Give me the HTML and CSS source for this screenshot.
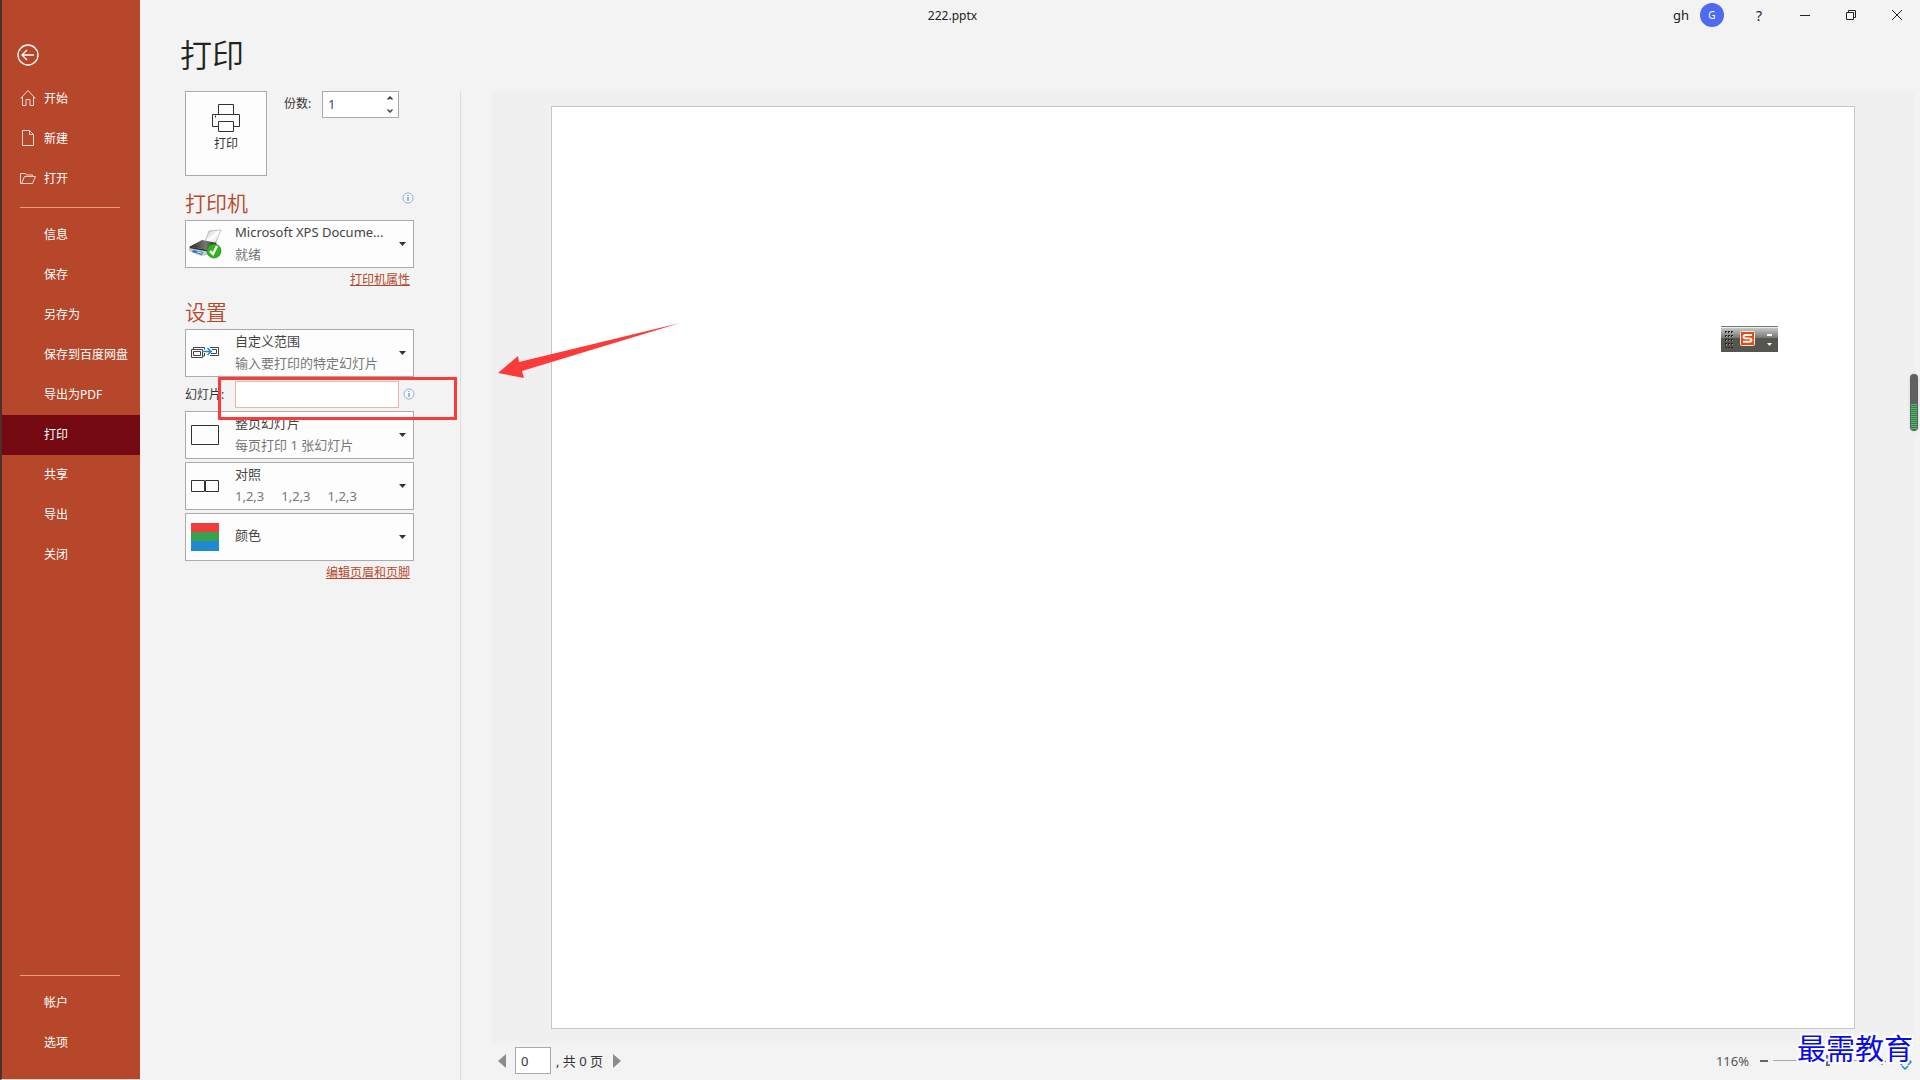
FILE: index.html
```html
<!DOCTYPE html>
<html lang="zh-CN">
<head>
  <meta charset="UTF-8">
  <meta name="viewport" content="width=device-width, initial-scale=1.0">
  <title>222.pptx</title>
  <link rel="stylesheet" href="styles.css">
</head>
<body>
  <nav class="sidebar">
    <button class="back" aria-label="返回">
      <svg width="22" height="22" viewBox="0 0 22 22" fill="none" stroke="#fff" stroke-width="1.3"><circle cx="11" cy="11" r="10"/><path d="M17 11H5.500M10 6l-5 5 5 5"/></svg>
    </button>
    <a href="#" class="nav-item with-icon">
      <svg width="16" height="18" viewBox="0 0 16 18" fill="none" stroke="#f3d9d1"><path d="M.5 9.500 8 1.500l7.500 8M2.500 8v8.500h3.500v-6h4v6h3.500V8"/></svg>开始</a>
    <a href="#" class="nav-item with-icon">
      <svg width="16" height="18" viewBox="0 0 16 18" fill="none" stroke="#f3d9d1"><path d="M2.500 1.500h7l4 4v11h-11zM9.500 1.500v4h4"/></svg>新建</a>
    <a href="#" class="nav-item with-icon">
      <svg width="16" height="18" viewBox="0 0 16 18" fill="none" stroke="#f3d9d1"><path d="M1.500 14.500h11l3-7h-11l-3 7h-1v-10h5l1 1.500h6v1.500"/></svg>打开</a>
    <hr>
    <a href="#" class="nav-item">信息</a>
    <a href="#" class="nav-item">保存</a>
    <a href="#" class="nav-item">另存为</a>
    <a href="#" class="nav-item">保存到百度网盘</a>
    <a href="#" class="nav-item">导出为PDF</a>
    <a href="#" class="nav-item active">打印</a>
    <a href="#" class="nav-item">共享</a>
    <a href="#" class="nav-item">导出</a>
    <a href="#" class="nav-item">关闭</a>
    <hr class="bottom-line">
    <a href="#" class="nav-item">帐户</a>
    <a href="#" class="nav-item">选项</a>
  </nav>

  <main>
    <header class="titlebar">
      <span class="doc-name">222.pptx</span>
      <span class="user">gh</span>
      <span class="avatar">G</span>
      <button class="win-btn" aria-label="帮助">?</button>
      <button class="win-btn" aria-label="最小化"><svg width="12" height="12" stroke="#222"><path d="M1 6.500h10"/></svg></button>
      <button class="win-btn" aria-label="还原"><svg width="12" height="12" fill="none" stroke="#222"><path d="M1.500 3.500h7v7h-7zM3.500 3.500v-2h7v7h-2"/></svg></button>
      <button class="win-btn" aria-label="关闭"><svg width="12" height="12" stroke="#222"><path d="M1 1l10 10M11 1L1 11"/></svg></button>
    </header>
    <h1>打印</h1>

    <div class="content">
      <section class="settings">
        <div class="print-row">
          <button class="print-btn">
            <svg width="28" height="28" viewBox="0 0 28 28" fill="#fdfdfd" stroke="#333"><path d="M6.500 10.500v-10h15v10"/><path d="M.5 10.500h27v12H.5z"/><path d="M6.500 17.500h15v10h-15z"/><path d="M3 12.500h1" stroke-width="2"/></svg>
            打印
          </button>
          <label for="copies">份数:</label>
          <div class="spin">
            <input type="text" id="copies" value="1">
            <div class="spin-btns">
              <button aria-label="增加"><svg width="6" height="4" fill="none" stroke="#444" stroke-width="1.500"><path d="M.5 3.500l2.500-2.500 2.500 2.500"/></svg></button>
              <button aria-label="减少"><svg width="6" height="4" fill="none" stroke="#444" stroke-width="1.500"><path d="M.5.5l2.500 2.500 2.500-2.500"/></svg></button>
            </div>
          </div>
        </div>

        <div class="section-head">
          <h2>打印机</h2>
          <svg class="info" width="12" height="12" viewBox="0 0 12 12"><circle cx="6" cy="6" r="5" fill="#f8fbff" stroke="#8fb0e0"/><path d="M6 5v4M6 3v1" stroke="#4a6fb5"/></svg>
        </div>
        <div class="combo">
          <select aria-label="打印机"><option>Microsoft XPS Docume...</option></select>
          <svg class="icon printer" width="34" height="30" viewBox="0 0 34 30">
            <defs>
              <linearGradient id="lid" x2="1" y2="0"><stop stop-color="#222"/><stop offset=".6" stop-color="#777"/><stop offset="1" stop-color="#222"/></linearGradient>
              <linearGradient id="sheet" x2="1" y2="1"><stop stop-color="#bbb"/><stop offset=".5" stop-color="#fff"/><stop offset="1" stop-color="#ccc"/></linearGradient>
            </defs>
            <path d="M17 12l4-10 12-1-6 14z" fill="url(#sheet)" stroke="#aaa" stroke-width=".7"/>
            <path d="M1 18l13-7 15 3-8 7z" fill="url(#lid)"/>
            <path d="M1 18l19 3v5l-7 1-12-5z" fill="#c4ccd2"/>
            <path d="M2 18.500l17 3" stroke="#333" stroke-width="1.500"/>
            <path d="M5 21l10 2-1 3-10-3z" fill="#2f75b8"/><path d="M9 23l5 1" stroke="#8fe0e8" stroke-width="1.500"/>
            <circle cx="26" cy="22" r="7" fill="#2fb51c" stroke="#16870e" stroke-width=".7"/>
            <path d="M22 22l3 3 4-8" fill="none" stroke="#fff" stroke-width="2.400"/>
          </svg>
          <span class="desc">就绪</span>
          <svg class="caret" width="7" height="4"><path d="M0 0h7L3.500 4z"/></svg>
        </div>
        <a href="#" class="link">打印机属性</a>

        <div class="section-head second"><h2>设置</h2></div>
        <div class="combo">
          <select aria-label="打印范围"><option>自定义范围</option></select>
          <svg class="icon" width="28" height="28" viewBox="0 0 28 28" fill="none" stroke="#444">
            <path d="M2.500 10.500v-2h11v2M.5 10.500h11v8H.5zM2.500 12.500h7v4h-7zM13.500 14v3h-2"/><path d="M19 8.500h8.500v8H19M21 10.500h4.500v4H20"/><path d="M11 12.500h10M16.500 9l3.500 3.500-3.500 3.500" stroke="#1f8ad0" stroke-width="1.500"/>
          </svg>
          <span class="desc">输入要打印的特定幻灯片</span>
          <svg class="caret" width="7" height="4"><path d="M0 0h7L3.500 4z"/></svg>
        </div>
        <div class="slides-row">
          <label for="slides">幻灯片:</label>
          <input type="text" id="slides">
          <svg class="info" width="12" height="12" viewBox="0 0 12 12"><circle cx="6" cy="6" r="5" fill="#f8fbff" stroke="#8fb0e0"/><path d="M6 5v4M6 3v1" stroke="#4a6fb5"/></svg>
          <div class="mark-box"></div>
        </div>
        <div class="combo">
          <select aria-label="版式"><option>整页幻灯片</option></select>
          <svg class="icon" width="28" height="28" fill="none" stroke="#333"><path d="M.5 4.500h27v19H.5z"/></svg>
          <span class="desc">每页打印 1 张幻灯片</span>
          <svg class="caret" width="7" height="4"><path d="M0 0h7L3.500 4z"/></svg>
        </div>
        <div class="combo">
          <select aria-label="对照"><option>对照</option></select>
          <svg class="icon" width="28" height="28" fill="none" stroke="#333"><path d="M.5 8.500h13v11H.5zM14.500 8.500h13v11h-13z"/></svg>
          <span class="desc collate"><span>1,2,3</span><span>1,2,3</span><span>1,2,3</span></span>
          <svg class="caret" width="7" height="4"><path d="M0 0h7L3.500 4z"/></svg>
        </div>
        <div class="combo single">
          <select aria-label="颜色"><option>颜色</option></select>
          <svg class="icon" width="28" height="28"><path d="M0 0h28v9H0z" fill="#ee3e3b"/><path d="M0 9h28v9H0z" fill="#38a04f"/><path d="M0 18h28v10H0z" fill="#1f8ad0"/></svg>
          <svg class="caret" width="7" height="4"><path d="M0 0h7L3.500 4z"/></svg>
        </div>
        <a href="#" class="link">编辑页眉和页脚</a>
      </section>

      <section class="preview">
        <div class="canvas">
          <div class="slide-page"></div>
        </div>
        <footer>
          <button class="page-btn" aria-label="上一页"><svg width="8" height="14" fill="#8c8c8c"><path d="M8 0v14L0 7z"/></svg></button>
          <input type="text" class="page-no" value="0" aria-label="页码">
          <span class="page-total">, 共 0 页</span>
          <button class="page-btn" aria-label="下一页"><svg width="8" height="14" fill="#8c8c8c"><path d="M0 0v14l8-7z"/></svg></button>
          <span class="zoom-value">116%</span>
          <button class="zoom-btn" aria-label="缩小"><svg width="8" height="8" stroke="#666" stroke-width="2"><path d="M0 4h8"/></svg></button>
          <input type="range" class="zoom-range" value="53" aria-label="缩放">
          <button class="zoom-btn" aria-label="放大"><svg width="8" height="8" stroke="#666" stroke-width="2"><path d="M0 4h8M4 0v8"/></svg></button>
          <button class="zoom-btn fit" aria-label="适应页面"><svg width="14" height="14" fill="none" stroke="#1f8ad0" stroke-width="1.500"><path d="M4 3L1 6l3 3M10 3l3 3-3 3M4 10l3 3 3-3"/></svg></button>
        </footer>
        <svg class="arrow" width="182" height="56"><path d="M0 50l20-17 1 6L182 0 24 48l2 7z" fill="#fb3a3a"/></svg>
        <div class="ime">
          <svg width="57" height="26">
            <defs>
              <linearGradient id="bar" x2="0" y2="1"><stop stop-color="#d8d8d8"/><stop offset=".45" stop-color="#777"/><stop offset=".46" stop-color="#555650"/><stop offset="1" stop-color="#555650"/></linearGradient>
              <pattern id="dots" width="3" height="4" patternUnits="userSpaceOnUse" x="4" y="5"><path d="M0 0h2v2H0z" fill="#222"/><path d="M1 1h1v1H1z" fill="#aaa"/></pattern>
            </defs>
            <path d="M0 0h57v26H0z" fill="url(#bar)"/><path d="M0 .5h57" stroke="#777"/><path d="M0 1.500h57" stroke="#eee"/>
            <path d="M4 5h8v17H4z" fill="url(#dots)"/>
            <rect x="19.500" y="5.500" width="14" height="14" rx="1" fill="#ea4b0c" stroke="#eee"/>
            <path d="M31 9h-6q-2.500 0-2.500 1.700t2.500 1.700h3q2.500 0 2.500 1.700t-2.500 1.700H22" fill="none" stroke="#fff" stroke-width="1.900"/>
            <path d="M46 8h5v2h-5zM46 17h5l-2.500 3z" fill="#fff"/>
          </svg>
        </div>
        <div class="meter"><div class="meter-level"></div></div>
        <div class="watermark">最需教育</div>
      </section>
    </div>
  </main>
</body>
</html>
```

FILE: styles.css
```css
* {
  box-sizing: border-box;
}
body {
  margin: 0;
  display: flex;
  min-height: 100vh;
  background: #f3f3f3;
  color: #333;
  font-family: "Noto Sans", "Noto Sans CJK SC", sans-serif;
  font-size: 12px;
  overflow: hidden;
}
button, input, select {
  font: inherit;
  color: inherit;
  margin: 0;
}
button {
  background: none;
  border: none;
  padding: 0;
}
svg {
  display: block;
  flex: none;
}

/* sidebar */
.sidebar {
  width: 140px;
  flex: none;
  display: flex;
  flex-direction: column;
  background: #b7472a;
  border-left: 2px solid #4d3029;
  border-bottom: 1px solid #ddd;
  padding: 44px 0 16px;
}
.back {
  align-self: flex-start;
  margin: 0 0 12px 15px;
}
.nav-item {
  display: flex;
  align-items: center;
  height: 40px;
  padding-left: 42px;
  padding-bottom: 2px;
  color: #fff;
  text-decoration: none;
}
.with-icon {
  padding-left: 18px;
  padding-bottom: 0;
  gap: 8px;
}
.active {
  background: #740912;
}
.sidebar hr {
  width: 100px;
  height: 1px;
  border: none;
  background: #ee9a84;
  margin: 9px 0 7px 18px;
}
.sidebar .bottom-line {
  margin-top: auto;
}

/* title bar */
main {
  flex: 1;
  display: flex;
  flex-direction: column;
  min-width: 0;
}
.titlebar {
  display: flex;
  align-items: center;
  height: 30px;
  color: #222;
}
.doc-name {
  flex: 1;
  text-align: center;
  padding-left: 92px;
}
.user {
  font-size: 13px;
}
.avatar {
  width: 24px;
  height: 24px;
  line-height: 24px;
  border-radius: 50%;
  background: #4f6bed;
  color: #fff;
  font-size: 10px;
  text-align: center;
  margin: 0 12px 0 11px;
}
.win-btn {
  width: 46px;
  height: 30px;
  display: flex;
  align-items: center;
  justify-content: center;
  font-size: 14px;
}
h1 {
  margin: 0 0 11px 40px;
  line-height: 50px;
  font-size: 32px;
  font-weight: 350;
  color: #222;
}
.content {
  flex: 1;
  display: flex;
}

/* print settings */
.settings {
  width: 321px;
  flex: none;
  padding: 0 46px 0 45px;
  border-right: 1px solid #dcdcdc;
}
.print-row {
  display: flex;
  align-items: flex-start;
}
.print-btn {
  width: 82px;
  height: 85px;
  display: flex;
  flex-direction: column;
  align-items: center;
  gap: 2px;
  padding-top: 12px;
  background: #fdfdfd;
  border: 1px solid #ababab;
}
.print-row label {
  width: 38px;
  margin-left: 17px;
  line-height: 26px;
}
.spin {
  display: flex;
  width: 77px;
  height: 27px;
  background: #fff;
  border: 1px solid #ababab;
}
.spin input {
  flex: 1;
  min-width: 0;
  border: none;
  background: none;
  padding: 0 5px 2px;
  font-size: 13px;
  color: #3b4a80;
}
.spin-btns {
  display: flex;
  flex-direction: column;
  width: 16px;
}
.spin-btns button {
  flex: 1;
  display: flex;
  align-items: center;
  justify-content: center;
}
.section-head {
  display: flex;
  justify-content: space-between;
  margin-top: 12px;
}
.section-head.second {
  margin-top: 8px;
}
h2 {
  margin: 0;
  line-height: 30px;
  padding-bottom: 2px;
  font-size: 21px;
  font-weight: 350;
  color: #b7472a;
}
.section-head .info {
  margin-top: 4px;
}
.combo {
  display: grid;
  grid-template-columns: 50px 1fr 15px;
  height: 48px;
  margin-bottom: 3px;
  font-size: 13px;
}
.combo > * {
  grid-row: 1;
  pointer-events: none;
}
.combo select {
  grid-column: 1 / -1;
  appearance: none;
  pointer-events: auto;
  width: 100%;
  height: 48px;
  padding: 0 17px 24px 49px;
  background: #fdfdfd;
  border: 1px solid #ababab;
  border-radius: 0;
  color: #444;
}
.combo.single select {
  padding-bottom: 4px;
}
.combo .icon {
  grid-column: 1;
  align-self: center;
  margin-left: 6px;
}
.combo .printer {
  margin-left: 3px;
}
.desc {
  grid-column: 2;
  align-self: end;
  line-height: 18px;
  padding-bottom: 5px;
  color: #777;
}
.collate {
  display: flex;
  gap: 17px;
}
.caret {
  grid-column: 3;
  align-self: center;
  fill: #333;
}
.link {
  display: block;
  text-align: right;
  line-height: 18px;
  padding-right: 4px;
  color: #b7472a;
}
.slides-row {
  position: relative;
  display: flex;
  align-items: center;
  height: 28px;
  margin-bottom: 3px;
}
.slides-row label {
  width: 50px;
  flex: none;
}
.slides-row input {
  width: 164px;
  height: 27px;
  background: #fff;
  border: 1px solid #f5b49c;
  padding: 0 5px;
}
.slides-row .info {
  margin-left: 4px;
}
.mark-box {
  position: absolute;
  left: 33px;
  top: -3px;
  width: 239px;
  height: 43px;
  border: 3px solid #fb3a3a;
}

/* preview */
.preview {
  position: relative;
  flex: 1;
  display: flex;
  flex-direction: column;
  padding: 0 5px 0 31px;
}
.canvas {
  flex: 1;
  display: flex;
  padding: 15px 60px 14px 59px;
  background: #f0f0f0;
}
.slide-page {
  flex: 1;
  background: #fff;
  border: 1px solid #c6c6c6;
}
footer {
  display: flex;
  align-items: center;
  height: 37px;
  padding: 0 3px 2px 6px;
}
.page-no {
  width: 36px;
  height: 27px;
  margin: 0 5px 0 9px;
  padding: 0 5px;
  background: #fff;
  border: 1px solid #ababab;
  font-size: 13px;
}
.page-total {
  margin-right: 10px;
  font-size: 13px;
}
.zoom-value {
  margin-left: auto;
  margin-right: 11px;
  font-size: 13px;
  color: #555;
}
.zoom-range {
  appearance: none;
  width: 104px;
  height: 11px;
  margin: 0 1px 0 5px;
  background: linear-gradient(#aaa, #aaa) center / 100% 1px no-repeat;
}
.zoom-range::-webkit-slider-thumb {
  appearance: none;
  width: 4px;
  height: 11px;
  background: #666;
}
.fit {
  margin-left: 12px;
  padding-top: 4px;
}
.arrow {
  position: absolute;
  left: 37px;
  top: 232px;
}
.ime {
  position: absolute;
  right: 142px;
  top: 235px;
}
.meter {
  position: absolute;
  right: 2px;
  top: 283px;
  width: 8px;
  height: 57px;
  padding: 30px 1px 2px;
  border-radius: 4px;
  background: #606060;
  box-shadow: 0 0 3px #ccc;
}
.meter-level {
  height: 100%;
  background: repeating-linear-gradient(#2fd05c 0 1px, #606060 1px 2px);
}
.watermark {
  position: absolute;
  right: 7px;
  bottom: 17px;
  line-height: 32px;
  font-size: 29px;
  font-family: "Noto Sans CJK SC", sans-serif;
  color: #0a0af0;
  -webkit-text-stroke: 4px #fff;
  paint-order: stroke fill;
}
```
